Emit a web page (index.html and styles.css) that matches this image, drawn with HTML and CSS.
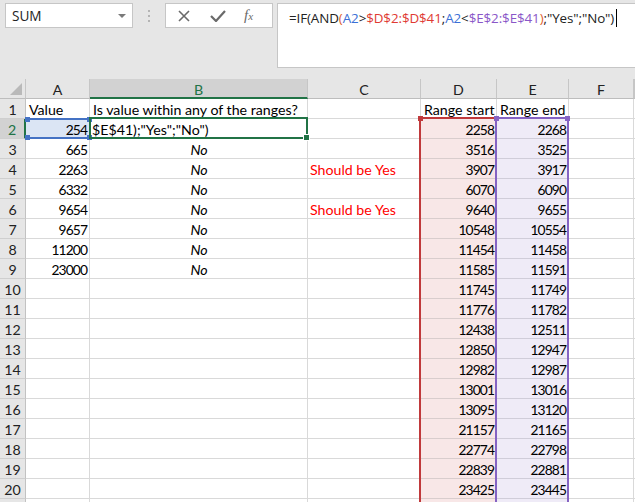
FILE: index.html
```html
<!DOCTYPE html>
<html>
<head>
<meta charset="utf-8">
<link rel="stylesheet" href="styles.css">
</head>
<body>
<div class="topbar">
  <div class="namebox"><span class="nb-text">SUM</span><span class="nb-arrow"></span></div>
  <div class="dots"><i></i><i></i><i></i></div>
  <div class="btnbox">
    <svg class="ic-x" width="12" height="12" viewBox="0 0 12 12"><path d="M1 1 L11 11 M11 1 L1 11" stroke="#6a6a6a" stroke-width="1.6" fill="none"/></svg>
    <svg class="ic-ok" width="16" height="12" viewBox="0 0 16 12"><path d="M1 6 L6 11 L15 1" stroke="#6a6a6a" stroke-width="2.2" fill="none"/></svg>
    <span class="ic-fx"><span class="f">f</span><span class="x">x</span></span>
  </div>
  <div class="formula">=IF(AND<span class="po">(</span><span class="rb">A2</span>&gt;<span class="rr">$D$2:$D$41</span>;<span class="rb">A2</span>&lt;<span class="rp">$E$2:$E$41</span><span class="po">)</span>;"Yes";"No")<span class="caret"></span></div>
</div>

<div class="sheet">
  <div class="row hdr">
    <div class="c rh corner"><span class="tri"></span></div>
    <div class="c ch">A</div><div class="c ch sel">B</div><div class="c ch">C</div><div class="c ch">D</div><div class="c ch">E</div><div class="c ch">F</div><div class="c ch"></div>
  </div>
  <div class="row"><div class="c rh">1</div><div class="c">Value</div><div class="c">Is value within any of the ranges?</div><div class="c"></div><div class="c">Range start</div><div class="c">Range end</div><div class="c"></div><div class="c"></div></div>
  <div class="row"><div class="c rh rsel">2</div><div class="c num ahl">254</div><div class="c edit">$E$41);"Yes";"No")</div><div class="c"></div><div class="c num dr">2258</div><div class="c num er">2268</div><div class="c"></div><div class="c"></div></div>
  <div class="row"><div class="c rh">3</div><div class="c num">665</div><div class="c no">No</div><div class="c"></div><div class="c num dr">3516</div><div class="c num er">3525</div><div class="c"></div><div class="c"></div></div>
  <div class="row"><div class="c rh">4</div><div class="c num">2263</div><div class="c no">No</div><div class="c warn">Should be Yes</div><div class="c num dr">3907</div><div class="c num er">3917</div><div class="c"></div><div class="c"></div></div>
  <div class="row"><div class="c rh">5</div><div class="c num">6332</div><div class="c no">No</div><div class="c"></div><div class="c num dr">6070</div><div class="c num er">6090</div><div class="c"></div><div class="c"></div></div>
  <div class="row"><div class="c rh">6</div><div class="c num">9654</div><div class="c no">No</div><div class="c warn">Should be Yes</div><div class="c num dr">9640</div><div class="c num er">9655</div><div class="c"></div><div class="c"></div></div>
  <div class="row"><div class="c rh">7</div><div class="c num">9657</div><div class="c no">No</div><div class="c"></div><div class="c num dr">10548</div><div class="c num er">10554</div><div class="c"></div><div class="c"></div></div>
  <div class="row"><div class="c rh">8</div><div class="c num">11200</div><div class="c no">No</div><div class="c"></div><div class="c num dr">11454</div><div class="c num er">11458</div><div class="c"></div><div class="c"></div></div>
  <div class="row"><div class="c rh">9</div><div class="c num">23000</div><div class="c no">No</div><div class="c"></div><div class="c num dr">11585</div><div class="c num er">11591</div><div class="c"></div><div class="c"></div></div>
  <div class="row"><div class="c rh">10</div><div class="c"></div><div class="c"></div><div class="c"></div><div class="c num dr">11745</div><div class="c num er">11749</div><div class="c"></div><div class="c"></div></div>
  <div class="row"><div class="c rh">11</div><div class="c"></div><div class="c"></div><div class="c"></div><div class="c num dr">11776</div><div class="c num er">11782</div><div class="c"></div><div class="c"></div></div>
  <div class="row"><div class="c rh">12</div><div class="c"></div><div class="c"></div><div class="c"></div><div class="c num dr">12438</div><div class="c num er">12511</div><div class="c"></div><div class="c"></div></div>
  <div class="row"><div class="c rh">13</div><div class="c"></div><div class="c"></div><div class="c"></div><div class="c num dr">12850</div><div class="c num er">12947</div><div class="c"></div><div class="c"></div></div>
  <div class="row"><div class="c rh">14</div><div class="c"></div><div class="c"></div><div class="c"></div><div class="c num dr">12982</div><div class="c num er">12987</div><div class="c"></div><div class="c"></div></div>
  <div class="row"><div class="c rh">15</div><div class="c"></div><div class="c"></div><div class="c"></div><div class="c num dr">13001</div><div class="c num er">13016</div><div class="c"></div><div class="c"></div></div>
  <div class="row"><div class="c rh">16</div><div class="c"></div><div class="c"></div><div class="c"></div><div class="c num dr">13095</div><div class="c num er">13120</div><div class="c"></div><div class="c"></div></div>
  <div class="row"><div class="c rh">17</div><div class="c"></div><div class="c"></div><div class="c"></div><div class="c num dr">21157</div><div class="c num er">21165</div><div class="c"></div><div class="c"></div></div>
  <div class="row"><div class="c rh">18</div><div class="c"></div><div class="c"></div><div class="c"></div><div class="c num dr">22774</div><div class="c num er">22798</div><div class="c"></div><div class="c"></div></div>
  <div class="row"><div class="c rh">19</div><div class="c"></div><div class="c"></div><div class="c"></div><div class="c num dr">22839</div><div class="c num er">22881</div><div class="c"></div><div class="c"></div></div>
  <div class="row"><div class="c rh">20</div><div class="c"></div><div class="c"></div><div class="c"></div><div class="c num dr">23425</div><div class="c num er">23445</div><div class="c"></div><div class="c"></div></div>
  <div class="row"><div class="c rh"></div><div class="c"></div><div class="c"></div><div class="c"></div><div class="c num dr"></div><div class="c num er"></div><div class="c"></div><div class="c"></div></div>

  <div class="box box-a"><i class="h tl"></i><i class="h tr"></i><i class="h bl"></i><i class="h br"></i></div>
  <div class="box box-d"><i class="h tl"></i></div>
  <div class="box box-e"><i class="h tl"></i><i class="h tr"></i></div>
  <div class="box box-b"><i class="fill"></i></div>
</div>
</body>
</html>
```

FILE: styles.css
```css
html, body {
  margin: 0;
  padding: 0;
}
body {
  width: 635px;
  height: 502px;
  overflow: hidden;
  background: #e6e6e6;
  font-family: Lato, "Liberation Sans", sans-serif;
  color: #000;
}

/* ---------- formula bar ---------- */
.topbar {
  height: 79px;
  display: flex;
  align-items: flex-start;
  padding: 3px 0 0 5px;
  box-sizing: border-box;
}
.namebox {
  width: 128px;
  height: 25px;
  box-sizing: border-box;
  border: 1px solid #c6c6c6;
  background: #fff;
  display: flex;
  align-items: center;
  justify-content: space-between;
  padding: 0 6px 0 6px;
  font-family: "Open Sans", "Noto Sans", sans-serif;
  font-size: 13.6px;
  color: #222;
}
.nb-arrow {
  width: 0;
  height: 0;
  border-left: 4px solid transparent;
  border-right: 4px solid transparent;
  border-top: 4px solid #7a7a7a;
  margin-top: 1px;
}
.dots {
  width: 32px;
  height: 25px;
  display: flex;
  flex-direction: column;
  align-items: center;
  justify-content: center;
  gap: 3px;
}
.dots i {
  display: block;
  width: 2px;
  height: 2px;
  background: #b4b4b4;
}
.btnbox {
  width: 108px;
  height: 25px;
  box-sizing: border-box;
  border: 1px solid #c6c6c6;
  background: #fff;
  display: flex;
  align-items: center;
  padding-left: 12px;
}
.ic-x { margin-right: 20px; }
.ic-ok { margin-right: 18px; margin-top: 1px; }
.ic-fx {
  font-family: "Liberation Serif", serif;
  font-style: italic;
  color: #6a6a6a;
  font-size: 15px;
  line-height: 1;
}
.ic-fx .x { font-size: 11px; }
.formula {
  margin-left: 4px;
  flex: 1;
  height: 65px;
  box-sizing: border-box;
  border: 1px solid #c6c6c6;
  border-right: none;
  background: #fff;
  padding: 4px 0 0 11px;
  font-family: "Open Sans", "Noto Sans", sans-serif;
  font-size: 13.4px;
  line-height: 20px;
  color: #222;
  white-space: nowrap;
  letter-spacing: -0.1px;
}
.rb { color: #3a70d6; }
.rr { color: #e03a33; }
.rp { color: #8a57c8; }
.po { color: #e0602a; }
.caret {
  display: inline-block;
  width: 1px;
  height: 18px;
  background: #000;
  vertical-align: -4px;
  margin-left: 2px;
}

/* ---------- sheet ---------- */
.sheet {
  position: relative;
  background: #fff;
}
.row {
  display: grid;
  grid-template-columns: 26px 64px 218px 113px 76px 72px 65px 1fr;
  height: 20px;
}
.c {
  box-sizing: border-box;
  border-right: 1px solid #d9d9d9;
  border-bottom: 1px solid #d9d9d9;
  background: #fff;
  font-size: 14.2px;
  line-height: 21px;
  padding: 0 2px 0 3px;
  white-space: nowrap;
  overflow: hidden;
}
.num {
  text-align: right;
  padding-right: 2px;
  font-size: 13.8px;
  letter-spacing: -0.9px;
}
.no { text-align: center; font-style: italic; }
.warn { color: #ff0000; padding-left: 2px; }
.edit { padding-left: 2px; }
.dr { background: #f8e7e7; border-bottom-color: #d9cdcd; }
.er { background: #efebf7; border-bottom-color: #d0cdd9; }
.ahl { background: #dbe5f4; }

.rh {
  background: #e6e6e6;
  border-right: 1px solid #c2c2c2;
  border-bottom: 1px solid #cfcfcf;
  text-align: center;
  padding: 0;
  color: #222;
}
.rsel {
  background: #d2d2d2;
  color: #217346;
  border-right: 2px solid #217346;
}
.hdr .c {
  background: #e6e6e6;
  border-right: 1px solid #c6c6c6;
  border-bottom: 1px solid #bdbdbd;
  text-align: center;
  padding: 0;
  color: #222;
}
.hdr .sel {
  background: #d2d2d2;
  color: #217346;
  border-bottom: 2px solid #217346;
}
.corner {
  position: relative;
}
.tri {
  position: absolute;
  right: 3px;
  bottom: 3px;
  width: 0;
  height: 0;
  border-left: 12px solid transparent;
  border-bottom: 12px solid #b9b9b9;
}

/* ---------- overlays ---------- */
.box {
  position: absolute;
  box-sizing: border-box;
  pointer-events: none;
}
.box-a {
  left: 27px;
  top: 39px;
  width: 63px;
  height: 21px;
  border-top: 2px solid #4472c4;
  border-bottom: 2px solid #4472c4;
}
.box-b {
  left: 89px;
  top: 38px;
  width: 219px;
  height: 22px;
  border: 2px solid #217346;
}
.box-d {
  left: 419px;
  top: 38px;
  width: 78px;
  height: 400px;
  border: 2px solid #c0393b;
}
.box-e {
  left: 495px;
  top: 38px;
  width: 74px;
  height: 400px;
  border: 2px solid #8563c3;
}
.h {
  position: absolute;
  width: 5px;
  height: 5px;
  display: block;
}
.box-a .h { background: #4472c4; }
.box-d .h { background: #c0393b; }
.box-e .h { background: #8563c3; }
.box-a .tl { left: -2px; top: -3px; }
.box-a .tr { right: -2px; top: -3px; }
.box-a .bl { left: -2px; bottom: -3px; }
.box-a .br { right: -2px; bottom: -3px; }
.box-d .tl, .box-e .tl { left: -3px; top: -3px; }
.box-e .tr { right: -3px; top: -3px; }
.fill {
  position: absolute;
  right: -4px;
  bottom: -4px;
  width: 5px;
  height: 5px;
  background: #217346;
  border: 1px solid #fff;
  display: block;
}
```
